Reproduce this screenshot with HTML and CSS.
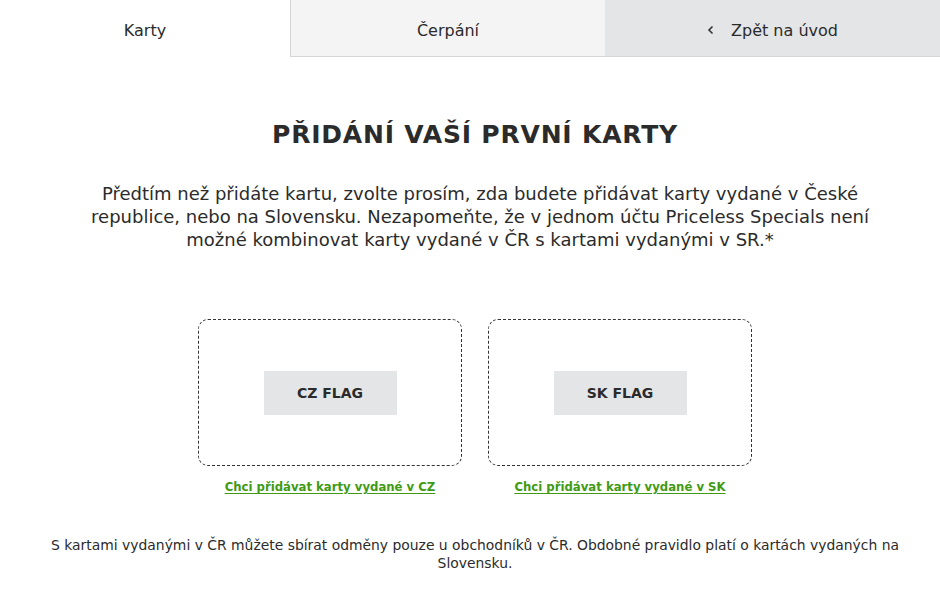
FILE: index.html
```html
<!DOCTYPE html>
<html lang="cs">
<head>
<meta charset="utf-8">
<title>Přidání karty</title>
<link rel="stylesheet" href="styles.css">
</head>
<body>
<nav class="tabs">
  <a class="tab tab-active" href="#">Karty</a>
  <a class="tab tab-mid" href="#">Čerpání</a>
  <a class="tab tab-back" href="#"><svg class="chev" width="8" height="10" viewBox="0 0 8 10"><path d="M5.5 1.5 L2 5 L5.5 8.5" fill="none" stroke="#333" stroke-width="1.6"/></svg>Zpět na úvod</a>
</nav>
<main class="content">
  <h1 class="title">PŘIDÁNÍ VAŠÍ PRVNÍ KARTY</h1>
  <p class="intro">Předtím než přidáte kartu, zvolte prosím, zda budete přidávat karty vydané v České republice, nebo na Slovensku. Nezapomeňte, že v jednom účtu Priceless Specials není možné kombinovat karty vydané v ČR s kartami vydanými v SR.*</p>
  <div class="choices">
    <div class="choice">
      <div class="card"><div class="flag">CZ FLAG</div></div>
      <a class="choice-link" href="#">Chci přidávat karty vydané v CZ</a>
    </div>
    <div class="choice">
      <div class="card"><div class="flag">SK FLAG</div></div>
      <a class="choice-link" href="#">Chci přidávat karty vydané v SK</a>
    </div>
  </div>
  <p class="note">S kartami vydanými v ČR můžete sbírat odměny pouze u obchodníků v ČR. Obdobné pravidlo platí o kartách vydaných na Slovensku.</p>
</main>
</body>
</html>
```
FILE: styles.css
```css
html, body {
  margin: 0;
  padding: 0;
  background: #fff;
}
body {
  font-family: "DejaVu Sans", "Open Sans", sans-serif;
  color: #2b2b2b;
}
.tabs {
  display: grid;
  grid-template-columns: 290px 315px 1fr;
  height: 57px;
}
.tab {
  display: flex;
  align-items: center;
  justify-content: center;
  text-decoration: none;
  color: #2b2b2b;
  font-size: 16px;
  padding-top: 4px;
  box-sizing: border-box;
}
.tab-active {
  background: #fff;
}
.tab-mid {
  background: #f4f4f4;
  border-left: 1px solid #d6d6d6;
  border-bottom: 1px solid #d6d6d6;
}
.tab-back {
  background: #e4e5e7;
  border-bottom: 1px solid #d6d6d6;
}
.chev {
  margin-right: 16px;
}
.content {
  display: flex;
  flex-direction: column;
  align-items: center;
  padding-left: 10px;
}
.title {
  margin: 62px 0 0;
  font-size: 25px;
  font-weight: bold;
  letter-spacing: 0.8px;
  line-height: 32px;
}
.intro {
  margin: 31px 0 0 10px;
  width: 800px;
  text-align: center;
  font-size: 18px;
  line-height: 23px;
}
.choices {
  display: flex;
  gap: 26px;
  margin: 68px 0 0 0;
}
.choice {
  display: flex;
  flex-direction: column;
  align-items: center;
}
.card {
  width: 264px;
  height: 147px;
  box-sizing: border-box;
  border: 1px dashed #333;
  border-radius: 10px;
  display: flex;
  align-items: center;
  justify-content: center;
}
.flag {
  width: 133px;
  height: 44px;
  background: #e4e5e7;
  display: flex;
  align-items: center;
  justify-content: center;
  font-size: 14px;
  font-weight: bold;
  color: #2b2b2b;
}
.choice-link {
  margin-top: 14px;
  color: #3f9a14;
  font-size: 11.7px;
  font-weight: bold;
  text-decoration: underline;
  text-underline-offset: 2px;
}
.note {
  margin: 42px 0 0;
  width: 860px;
  text-align: center;
  font-size: 13.9px;
  line-height: 18px;
  color: #2b2b2b;
}
```
